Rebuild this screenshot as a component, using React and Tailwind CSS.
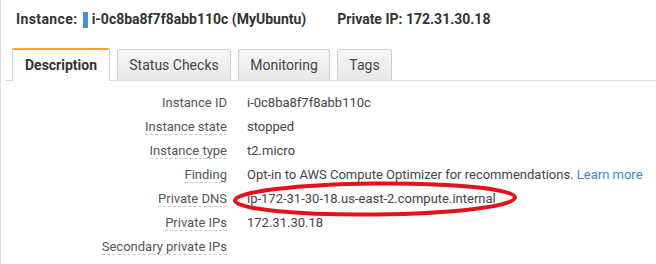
import React from "react";

const rows = [
  { label: "Instance ID", value: "i-0c8ba8f7f8abb110c", dashed: false },
  { label: "Instance state", value: "stopped", dashed: true },
  { label: "Instance type", value: "t2.micro", dashed: true },
  { label: "Finding", value: "finding", dashed: true },
  { label: "Private DNS", value: "ip-172-31-30-18.us-east-2.compute.internal", dashed: true },
  { label: "Private IPs", value: "172.31.30.18", dashed: true },
  { label: "Secondary private IPs", value: "", dashed: true },
];

const tabs = [
  { name: "Description", w: "w-[98px]", active: true },
  { name: "Status Checks", w: "w-[114px]" },
  { name: "Monitoring", w: "w-[92px]" },
  { name: "Tags", w: "w-[55px]" },
];

const App = () => {
  return (
    <div className="relative w-[656px] h-[264px] bg-white overflow-hidden border-l border-[#dcdcdc] font-['Roboto',sans-serif]">
      {/* header */}
      <div className="flex items-center h-[38px] pl-[15px] pt-[1px] text-[14px] font-bold text-[#333]">
        <span className="tracking-[0.4px]">Instance:</span>
        <span className="inline-block w-[5px] h-[16px] bg-[#4a90d9] ml-[5px] mr-[4px]"></span>
        <span>i-0c8ba8f7f8abb110c (MyUbuntu)</span>
        <span className="ml-[31px]">Private IP: 172.31.30.18</span>
      </div>

      {/* tabs */}
      <div className="flex items-end gap-[7px] h-[43px] ml-[4px] pl-[7px] border-b border-[#dcdcdc]">
        {tabs.map((t, i) =>
          t.active ? (
            <div
              key={i}
              className={`${t.w} h-[33px] -mb-px flex items-center justify-center bg-white border border-b-0 border-[#cfcfcf] border-t-2 border-t-[#f5a623] rounded-t-[2px] text-[14px] font-bold text-[#333]`}
            >
              {t.name}
            </div>
          ) : (
            <div
              key={i}
              className={`${t.w} h-[31px] flex items-center justify-center bg-gradient-to-b from-[#f7f7f7] to-[#e8e8e8] border border-b-0 border-[#cfcfcf] rounded-t-[3px] text-[14px] text-[#444]`}
            >
              {t.name}
            </div>
          )
        )}
      </div>

      {/* description */}
      <div className="pt-[10px] text-[13px]">
        {rows.map((r, i) => (
          <div key={i} className="grid grid-cols-[226px_1fr] gap-x-[20px] h-[24px] items-center">
            <div className="text-right">
              <span
                className={`text-[#555] leading-[18px] ${r.dashed ? "border-b border-dashed border-[#c8c8c8]" : ""}`}
              >
                {r.label}
              </span>
            </div>
            <div className="text-[#444] leading-[18px] whitespace-nowrap">
              {r.value === "finding" ? (
                <span>
                  Opt-in to AWS Compute Optimizer for recommendations.{" "}
                  <span className="text-[#3a8ad6]">Learn more</span>
                </span>
              ) : (
                r.value
              )}
            </div>
          </div>
        ))}
      </div>

      {/* red annotation */}
      <svg className="absolute left-0 top-0 pointer-events-none" width="656" height="264">
        <ellipse cx="374" cy="199" rx="140" ry="15.5" fill="none" stroke="#e5121c" strokeWidth="4" transform="rotate(-0.6 374 199)" />
      </svg>
    </div>
  );
};

export default App;
